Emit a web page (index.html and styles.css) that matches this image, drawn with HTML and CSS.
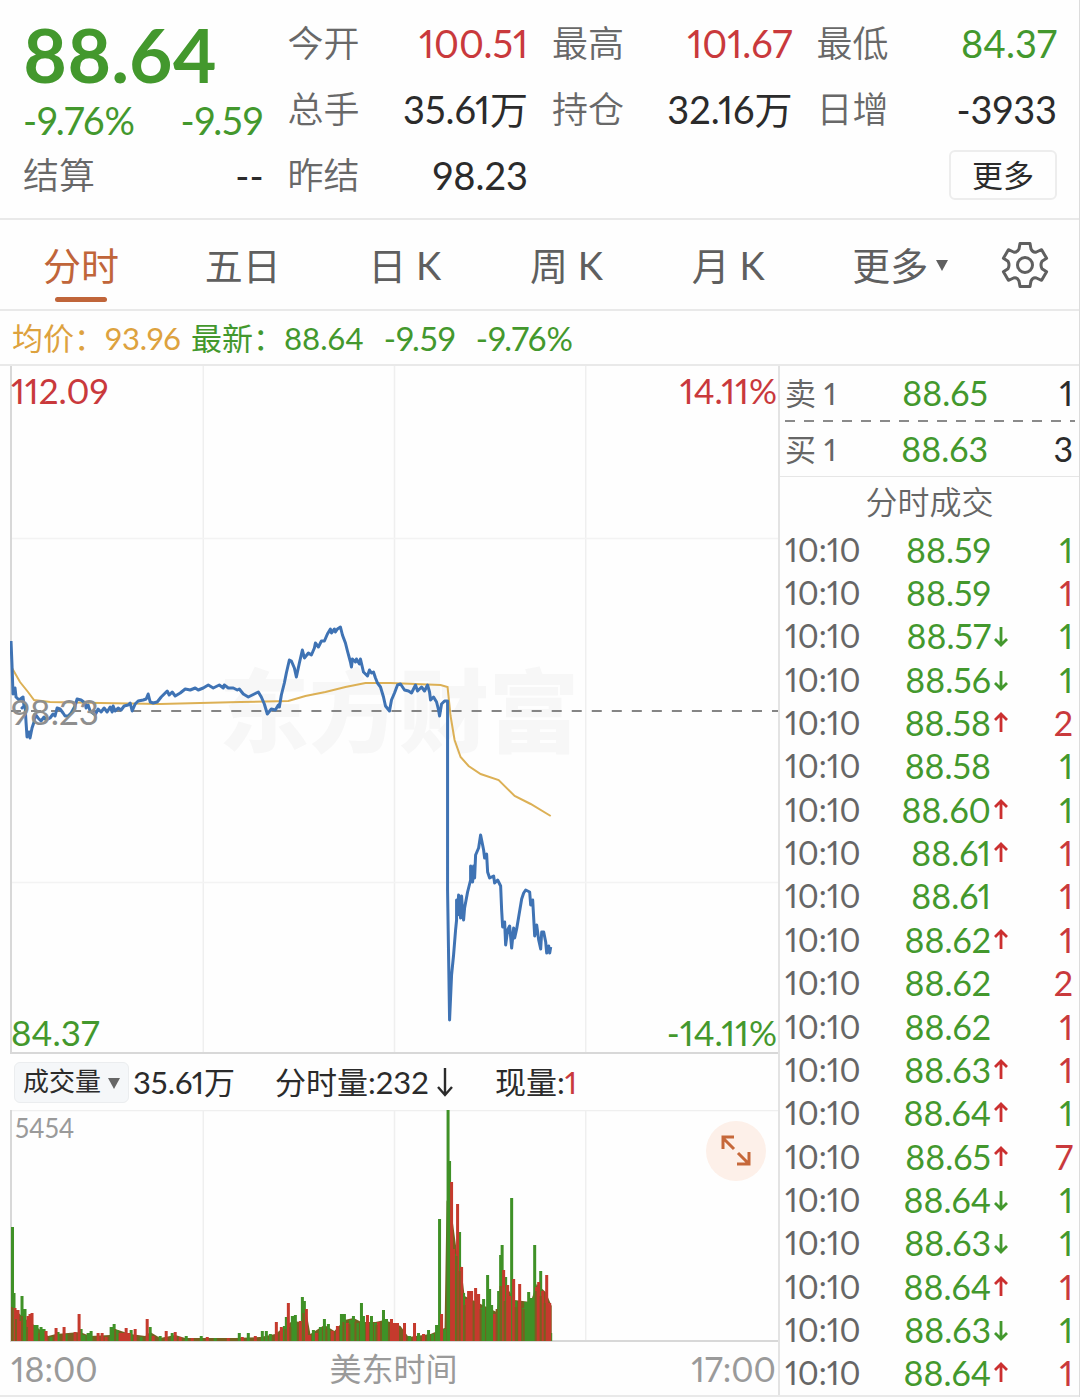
FILE: index.html
```html
<!DOCTYPE html>
<html lang="zh-CN">
<head>
<meta charset="utf-8">
<meta name="viewport" content="width=device-width, initial-scale=1">
<title>分时行情</title>
<link rel="stylesheet" href="styles.css">
</head>
<body>
<svg class="defs" aria-hidden="true">
  <symbol id="up" viewBox="0 0 16 24"><path d="M8 21V3M2 9l6-6 6 6" fill="none" stroke="currentColor" stroke-width="2.8"/></symbol>
  <symbol id="down" viewBox="0 0 16 24"><path d="M8 3v18M2 15l6 6 6-6" fill="none" stroke="currentColor" stroke-width="2.8"/></symbol>
  <symbol id="caret" viewBox="0 0 12 12"><path d="M0 1h12L6 12z" fill="currentColor"/></symbol>
</svg>
<div class="page">
  <header class="quote">
    <div class="quote-main">
      <div class="last green">88.64</div>
      <div class="pair change green"><span>-9.76%</span><span>-9.59</span></div>
      <div class="pair"><span class="label">结算</span><span>--</span></div>
    </div>
    <div class="quote-col">
      <div class="pair"><span class="label">今开</span><span class="red">100.51</span></div>
      <div class="pair"><span class="label">总手</span><span>35.61万</span></div>
      <div class="pair"><span class="label">昨结</span><span>98.23</span></div>
    </div>
    <div class="quote-col">
      <div class="pair"><span class="label">最高</span><span class="red">101.67</span></div>
      <div class="pair"><span class="label">持仓</span><span>32.16万</span></div>
    </div>
    <div class="quote-col">
      <div class="pair"><span class="label">最低</span><span class="green">84.37</span></div>
      <div class="pair"><span class="label">日增</span><span>-3933</span></div>
      <div class="pair end"><button class="more" type="button">更多</button></div>
    </div>
  </header>

  <nav class="tabs">
    <button class="tab active" type="button">分时</button>
    <button class="tab" type="button">五日</button>
    <button class="tab" type="button">日 K</button>
    <button class="tab" type="button">周 K</button>
    <button class="tab" type="button">月 K</button>
    <button class="tab" type="button">更多<svg class="tab-caret"><use href="#caret"/></svg></button>
    <button class="tab" type="button" aria-label="设置">
      <svg class="gear" viewBox="-24 -24 48 48"><path d="M-5-21.500H5L6-16Q8-12 11.400-13L16.600-15.300L21.600-6.700L17-3.700Q15 0 17 3.700L21.600 6.700L16.600 15.300L11.400 13Q8 12 6 16L5 21.500H-5L-6 16Q-8 12-11.400 13L-16.600 15.300L-21.600 6.700L-17 3.700Q-15 0-17-3.700L-21.600-6.700L-16.600-15.300L-11.400-13Q-8-12-6-16Z"/><circle r="7.500"/></svg>
    </button>
  </nav>

  <div class="summary green">
    <span class="amber">均价：93.96</span>
    <span class="latest">最新：88.64</span>
    <span class="delta">-9.59</span>
    <span class="delta">-9.76%</span>
  </div>

  <main class="board">
    <section class="charts">
      <div class="chart price-chart">
        <div class="watermark">东方财富</div>
        <svg class="plot" viewBox="10 366 767 688" preserveAspectRatio="none">
          <path class="grid" d="M203 366V1054M394 366V1054M585 366V1054"/>
          <path class="grid faint" d="M11 538.500H777M11 882.500H777"/>
          <path class="axis" d="M11 366V1053H777"/>
          <path class="prev" d="M11 711H777"/>
          <path class="avg" d="M12 668L20 682L28 692L34 700L50 702L100 703L160 704L240 702L288 701L305 696L325 692L345 687L365 683L390 683L440 685L447 687L450 716L454 740L460 757L468 766L480 774L498 780L514 796L530 804L550 816"/>
          <path class="line" d="M11 641L12 665L13 694L15 688L16 697L19 700L23 697L24 706L22 708L25 705L26 722L27 737L29 732L30 738L32 728L34 722L35 714L38 718L41 721L44 717L46 720L50 718L53 714L55 716L57 708L60 709L63 713L65 716L68 716L71 713L75 706L77 699L81 700L85 703L86 708L88 705L90 711L94 714L95 715L98 709L101 712L104 708L107 712L110 707L112 712L113 706L115 711L118 708L121 710L124 706L128 705L130 703L132 711L135 704L138 701L143 700L146 699L148 694L150 702L153 703L157 702L161 697L165 693L167 691L169 695L172 692L175 696L180 693L185 689L190 690L195 688L198 690L203 688L208 685L213 688L219 685L223 688L224 685L228 688L233 688L237 690L239 689L243 694L248 697L254 694L258 692L261 697L264 704L267 714L271 709L275 710L278 705L279 707L281 695L284 683L286 673L289 660L291 661L294 668L296 677L299 663L302 650L304 658L308 653L311 655L314 648L315 643L318 647L321 641L324 641L327 634L330 629L331 633L334 629L335 632L337 629L340 627L342 635L345 643L347 651L350 662L351 667L352 659L355 662L356 659L359 664L360 659L363 672L367 676L369 670L371 673L373 672L375 678L377 683L380 687L383 697L385 706L389 711L391 700L394 693L397 685L400 684L404 690L408 691L411 693L415 685L417 691L421 687L424 691L427 685L429 692L430 700L433 697L436 702L438 710L439 716L441 704L444 701L447 701L447 890L449 1020L451 975L453 955L455 930L456 920L456 900L457 915L458 895L460 918L461 896L462 912L463 920L464 908L467 892L470 880L470 866L472 882L473 866L474 878L475 855L478 848L480 835L483 850L484 858L486 854L487 872L489 878L493 876L494 883L497 880L500 886L501 910L502 927L504 922L505 945L507 930L509 926L511 948L513 928L514 938L516 929L518 917L521 899L523 893L525 890L529 892L530 905L532 900L534 936L536 925L538 940L540 949L541 932L543 932L545 942L546 953L548 946L549 953L550 947"/>
        </svg>
        <span class="tag top-left red">112.09</span>
        <span class="tag top-right red">14.11%</span>
        <span class="tag mid-left">98.23</span>
        <span class="tag bottom-left green">84.37</span>
        <span class="tag bottom-right green">-14.11%</span>
      </div>

      <div class="volume-head">
        <label class="picker"><select aria-label="指标"><option>成交量</option></select><svg class="picker-caret"><use href="#caret"/></svg></label>
        <span class="total">35.61万</span>
        <span class="minute">分时量:232<svg class="big-arrow" viewBox="0 0 16 30"><path d="M8 1v27M1 20l7 8 7-8"/></svg></span>
        <span>现量:<span class="red">1</span></span>
      </div>

      <div class="chart volume-chart">
        <svg class="plot" viewBox="10 1110 767 232" preserveAspectRatio="none">
          <path class="grid" d="M11 1110.500H777M203 1110V1341M394 1110V1341M585 1110V1341"/>
          <path class="axis" d="M11 1110V1341H777"/>
          <path class="bars mixed" d="M11 1341V1306L24 1318L34 1325L48 1336L56 1334L80 1332L90 1336L110 1335L115 1329L130 1334L145 1336L150 1332L160 1338L175 1335L185 1338L235 1338L260 1337L275 1334L285 1326L292 1321L300 1322L306 1312L310 1334L324 1325L334 1331L344 1320L353 1318L361 1322L375 1322L384 1320L400 1326L408 1337L430 1334L444 1328L446 1200L452 1220L456 1250L460 1262L464 1296L480 1304L496 1312L502 1270L508 1290L514 1300L530 1302L536 1284L545 1292L551 1306V1341Z"/>
          <path class="bars sell" d="M12.500 1341v-114M14 1341v-48M22 1341v-45M25 1341v-32M34 1341v-16M37 1341v-16M41 1341v-14M44 1341v-12M51 1341v-4M58 1341v-9M66 1341v-7M81 1341v-12M84 1341v-6M88 1341v-8M91 1341v-10M111 1341v-14M114 1341v-17M117 1341v-11M131 1341v-11M141 1341v-4M150 1341v-14M160 1341v-5M172 1341v-8M186 1341v-5M201 1341v-5M215 1341v-3M239 1341v-8M248 1341v-8M262 1341v-10M266 1341v-10M270 1341v-7M284 1341v-15M286 1341v-24M292 1341v-25M295 1341v-26M302 1341v-44M304 1341v-40M313 1341v-11M320 1341v-14M324 1341v-22M328 1341v-17M341 1341v-27M344 1341v-27M350 1341v-21M353 1341v-25M357 1341v-18M361 1341v-38M363 1341v-25M371 1341v-25M375 1341v-18M383 1341v-31M386 1341v-22M409 1341v-5M418 1341v-8M428 1341v-11M432 1341v-7M436 1341v-16M439 1341v-122M444 1341v-12M447.500 1341v-231M449 1341v-180M455 1341v-87M459 1341v-109M463 1341v-48M481 1341v-33M483 1341v-42M487 1341v-66M489 1341v-52M491 1341v-36M498 1341v-50M500 1341v-86M501.500 1341v-96M505 1341v-64M511 1341v-143M515 1341v-40M523 1341v-33M525 1341v-39M528 1341v-49M531 1341v-43M534 1341v-96M540 1341v-70M550 1341v-8"/>
          <path class="bars buy" d="M15 1341v-33M18 1341v-31M20 1341v-20M28 1341v-25M30 1341v-27M32 1341v-28M46 1341v-10M56 1341v-13M64 1341v-14M75 1341v-9M79 1341v-27M98 1341v-8M102 1341v-8M106 1341v-4M120 1341v-8M123 1341v-8M126 1341v-13M129 1341v-8M135 1341v-12M147 1341v-22M153 1341v-5M166 1341v-10M175 1341v-9M180 1341v-4M192 1341v-3M207 1341v-4M228 1341v-3M242 1341v-4M255 1341v-5M276 1341v-19M281 1341v-14M288 1341v-38M300 1341v-20M306 1341v-32M309 1341v-6M316 1341v-8M332 1341v-10M337 1341v-15M347 1341v-18M367 1341v-26M378 1341v-19M391 1341v-22M394 1341v-18M397 1341v-18M404 1341v-18M414 1341v-18M423 1341v-7M441 1341v-27M451 1341v-159M453 1341v-92M457 1341v-137M461 1341v-74M466 1341v-42M468 1341v-50M471 1341v-50M475 1341v-53M478 1341v-47M494 1341v-27M503 1341v-71M507 1341v-56M509 1341v-45M513 1341v-62M519 1341v-57M536 1341v-54M538 1341v-59M542 1341v-50M546 1341v-66M549 1341v-38"/>
          <path class="bars blend" d="M12 1341v-34M16 1341v-22M22 1341v-25M27 1341v-14M39 1341v-8M115 1341v-12M285 1341v-12M290 1341v-14M303 1341v-28M326 1341v-12M343 1341v-19M349 1341v-17M355 1341v-19M376 1341v-16M456 1341v-85M459 1341v-70M464 1341v-36M473 1341v-40M480 1341v-32M496 1341v-32M500 1341v-55M504 1341v-40M515 1341v-34M523 1341v-32M535 1341v-50M540 1341v-45M544 1341v-38"/>
        </svg>
        <span class="tag max-volume">5454</span>
        <button class="expand" type="button" aria-label="全屏"><svg viewBox="0 0 60 60"><path d="M28 16H17V28M17 17L28 28M43 31V43H31M43 43L32 32"/></svg></button>
      </div>

      <div class="time-axis"><span>18:00</span><span class="zone">美东时间</span><span>17:00</span></div>
    </section>

    <aside class="side">
      <div class="offer"><span>卖 1</span><span class="green">88.65</span><span class="dark">1</span></div>
      <svg class="divider"><path d="M0 1H290"/></svg>
      <div class="offer"><span>买 1</span><span class="green">88.63</span><span class="dark">3</span></div>
      <h2 class="side-title">分时成交</h2>
      <table class="ticks">
        <tbody>
          <tr><td>10:10</td><td>88.59<i></i></td><td class="green">1</td></tr>
          <tr><td>10:10</td><td>88.59<i></i></td><td class="red">1</td></tr>
          <tr><td>10:10</td><td>88.57<svg class="down"><use href="#down"/></svg></td><td class="green">1</td></tr>
          <tr><td>10:10</td><td>88.56<svg class="down"><use href="#down"/></svg></td><td class="green">1</td></tr>
          <tr><td>10:10</td><td>88.58<svg class="up"><use href="#up"/></svg></td><td class="red">2</td></tr>
          <tr><td>10:10</td><td>88.58<i></i></td><td class="green">1</td></tr>
          <tr><td>10:10</td><td>88.60<svg class="up"><use href="#up"/></svg></td><td class="green">1</td></tr>
          <tr><td>10:10</td><td>88.61<svg class="up"><use href="#up"/></svg></td><td class="red">1</td></tr>
          <tr><td>10:10</td><td>88.61<i></i></td><td class="red">1</td></tr>
          <tr><td>10:10</td><td>88.62<svg class="up"><use href="#up"/></svg></td><td class="red">1</td></tr>
          <tr><td>10:10</td><td>88.62<i></i></td><td class="red">2</td></tr>
          <tr><td>10:10</td><td>88.62<i></i></td><td class="red">1</td></tr>
          <tr><td>10:10</td><td>88.63<svg class="up"><use href="#up"/></svg></td><td class="red">1</td></tr>
          <tr><td>10:10</td><td>88.64<svg class="up"><use href="#up"/></svg></td><td class="green">1</td></tr>
          <tr><td>10:10</td><td>88.65<svg class="up"><use href="#up"/></svg></td><td class="red">7</td></tr>
          <tr><td>10:10</td><td>88.64<svg class="down"><use href="#down"/></svg></td><td class="green">1</td></tr>
          <tr><td>10:10</td><td>88.63<svg class="down"><use href="#down"/></svg></td><td class="green">1</td></tr>
          <tr><td>10:10</td><td>88.64<svg class="up"><use href="#up"/></svg></td><td class="red">1</td></tr>
          <tr><td>10:10</td><td>88.63<svg class="down"><use href="#down"/></svg></td><td class="green">1</td></tr>
          <tr><td>10:10</td><td>88.64<svg class="up"><use href="#up"/></svg></td><td class="red">1</td></tr>
        </tbody>
      </table>
    </aside>
  </main>
</div>
</body>
</html>
```
FILE: styles.css
```css
* { box-sizing: border-box; }

body {
  margin: 0;
  background: #fefefe;
  color: #2b2b2b;
  font-family: Lato, "Noto Sans CJK SC", sans-serif;
  font-variant-numeric: proportional-nums;
  font-size: 36px;
  line-height: 44px;
}

button, select { font: inherit; color: inherit; background: none; border: 0; padding: 0; margin: 0; }
button { cursor: pointer; }
svg { display: block; flex: none; }

.defs { position: absolute; width: 0; height: 0; }
.page { border-right: 1px solid #dcdcdc; }

.green { color: #43982d; }
.red { color: #c9393c; }
.amber { color: #dda23e; }
.dark { color: #2b2b2b; }
.label { color: #686868; font-size: 36px; font-weight: 350; }

/* Quote header */
.quote {
  display: grid;
  grid-template-columns: repeat(4, minmax(0, 1fr));
  gap: 24px;
  padding: 10px 22px 10px 23px;
  border-bottom: 2px solid #e9e9e9;
}
.pair { display: flex; align-items: center; justify-content: space-between; height: 66px; font-size: 38px; white-space: nowrap; }
.pair.end { justify-content: flex-end; }
.last { font-size: 75px; font-weight: 700; line-height: 88px; }
.change { height: 44px; }
.more { width: 108px; height: 50px; border: 2px solid #ededed; border-radius: 6px; font-size: 31px; line-height: 40px; }

/* Period tabs */
.tabs { display: grid; grid-template-columns: repeat(6, 3fr) 2fr; height: 91px; border-bottom: 2px solid #e9e9e9; color: #5f5f5f; font-size: 38px; }
.tab { position: relative; display: flex; align-items: center; justify-content: center; white-space: pre; }
.tab.active { color: #c0653a; }
.tab.active::after { content: ""; position: absolute; left: 50%; bottom: 7px; width: 52px; height: 5px; margin-left: -26px; border-radius: 3px; background: #c0653a; }
.tab-caret { position: absolute; left: 50%; margin-left: 46px; width: 12px; height: 12px; }
.gear { width: 48px; height: 48px; fill: none; stroke: #5f5f5f; stroke-width: 3; stroke-linejoin: round; }

.summary { display: flex; align-items: center; gap: 20px; height: 55px; padding-left: 12px; border-bottom: 2px solid #e9e9e9; font-size: 31px; white-space: nowrap; }
.latest { margin-left: -10px; }
.delta { font-size: 33px; }

/* Charts beside the trade list */
.board { display: grid; grid-template-columns: minmax(0, 1fr) 301px; border-bottom: 2px solid #e9e9e9; }
.chart { position: relative; padding-left: 10px; }
.plot { position: relative; width: 100%; fill: none; }
.price-chart .plot { height: 688px; }
.volume-chart .plot { height: 232px; }
.grid { stroke: #efefef; stroke-width: 1.5; }
.faint { stroke: #f3f3f3; }
.axis { stroke: #d8d8d8; stroke-width: 2; }
.prev { stroke: #858585; stroke-width: 2; stroke-dasharray: 10 10; }
.avg { stroke: #dcb055; stroke-width: 2; }
.line { stroke: #3f73b4; stroke-width: 3; stroke-linejoin: round; }
.watermark { position: absolute; inset: 0; display: flex; align-items: center; justify-content: center; padding-left: 20px; color: #f7f7f7; font-size: 90px; font-weight: 900; }
.tag { position: absolute; line-height: 40px; font-size: 35px; }
.top-left { top: 4px; left: 11px; }
.top-right { top: 4px; right: 1px; }
.mid-left { top: 325px; left: 11px; color: #8e8e8e; }
.bottom-left { bottom: 2px; left: 11px; }
.bottom-right { bottom: 2px; right: 1px; }

.volume-head { display: flex; align-items: center; height: 56px; padding-left: 14px; font-size: 31px; white-space: nowrap; }
.picker { position: relative; width: 115px; height: 41px; border: 1px solid #ebedef; border-radius: 6px; background: #f5f7f9; }
.picker select { display: block; appearance: none; width: 100%; height: 37px; padding-left: 8px; font-size: 26px; line-height: 37px; }
.picker-caret { position: absolute; right: 8px; top: 14px; width: 12px; height: 12px; color: #666; pointer-events: none; }
.total { width: 142px; padding-left: 4px; }
.minute { display: flex; align-items: center; gap: 8px; width: 224px; padding-left: 4px; }
.big-arrow { width: 16px; height: 30px; fill: none; stroke: #2b2b2b; stroke-width: 2.4; }

.sell { stroke: #3f9127; stroke-width: 3; }
.buy { stroke: #c53a2d; stroke-width: 3; }
.mixed { fill: #75601f; }
.blend { stroke: #7a5f20; stroke-width: 2; }
.max-volume { top: -2px; left: 15px; color: #9a9a9a; font-size: 26px; }
.expand { position: absolute; top: 11px; right: 12px; width: 60px; height: 60px; border-radius: 50%; background: #fdf0e9; }
.expand svg { width: 60px; height: 60px; fill: none; stroke: #c6683a; stroke-width: 3; }

.time-axis { display: grid; grid-template-columns: 1fr auto 1fr; align-items: center; height: 53px; padding: 0 2px 0 11px; color: #9a9a9a; font-size: 34px; }
.time-axis span:last-child { text-align: right; }
.zone { font-size: 32px; }

/* Best prices and recent trades */
.side { display: flex; flex-direction: column; border-left: 2px solid #e3e3e3; color: #666; font-size: 34px; }
.offer { display: grid; grid-template-columns: 60px 1fr 85px; align-items: center; height: 54px; padding: 0 6px 0 5px; }
.offer span:first-child { font-size: 31px; white-space: nowrap; }
.offer span:not(:first-child) { text-align: right; }
.divider { width: 290px; height: 2px; margin-left: 5px; fill: none; stroke: #8a8a8a; stroke-width: 2; stroke-dasharray: 10 9; }
.side-title { margin: 0; padding-right: 0; height: 52px; border-top: 1px solid #e6e6e6; font-size: 32px; font-weight: 350; line-height: 50px; text-align: center; }
.ticks { flex: 1; display: flex; flex-direction: column; }
.ticks tbody { flex: 1; display: grid; grid-auto-rows: 1fr; }
.ticks tr { display: grid; grid-template-columns: 90px 1fr 64px; align-items: center; padding: 0 6px 0 5px; }
.ticks td { display: flex; align-items: center; justify-content: flex-end; padding: 0; line-height: 40px; }
.ticks td:first-child { justify-content: flex-start; font-size: 32px; }
.ticks td:nth-child(2) { color: #43982d; }
.ticks i, .ticks svg { width: 16px; height: 24px; margin-left: 2px; }
.up { color: #cb2f2f; }
.down { color: #43982d; }
```
